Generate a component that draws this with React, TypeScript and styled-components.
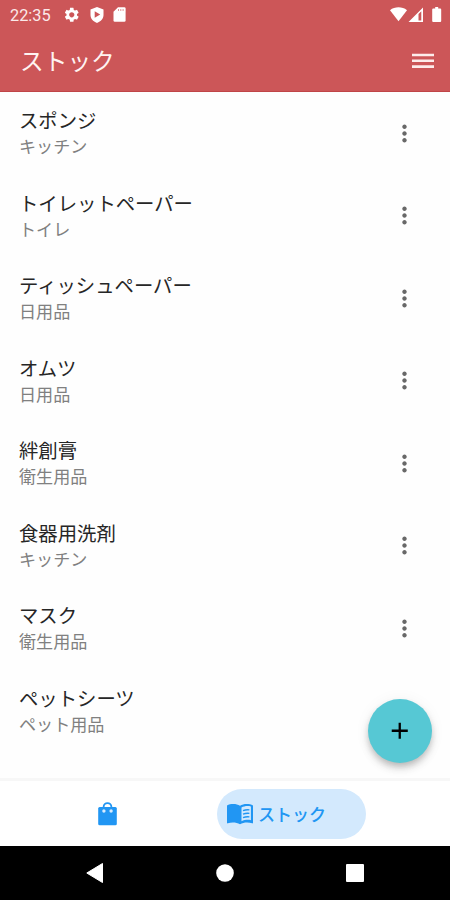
import React from "react";
import styled, { createGlobalStyle } from "styled-components";
import { MdAdd, MdMoreVert, MdSettings } from "react-icons/md";

const Global = createGlobalStyle`
  * { box-sizing: border-box; }
  body { margin: 0; background: #fff; font-family: Roboto, "Noto Sans CJK JP", sans-serif; }
  button { font: inherit; border: 0; padding: 0; background: none; }
  svg { display: block; flex: none; }
`;

const Screen = styled.div`
  position: relative;
  display: flex;
  flex-direction: column;
  width: 450px;
  height: 900px;
  overflow: hidden;
  background: #fefefe;
`;

const Header = styled.header`
  height: 92px;
  flex: none;
  background: #cc5658;
  border-bottom: 1px solid #c04547;
  color: #fff;
`;

const StatusBar = styled.div`
  display: flex;
  justify-content: space-between;
  height: 30px;
  padding: 0 7px 1px 10px;
  color: #fff;
`;

const StatusGroup = styled.div<{ $gap: number }>`
  display: flex;
  align-items: center;
  gap: ${(p) => p.$gap}px;
`;

const Clock = styled.span`
  width: 43px;
  padding-top: 1px;
  font-size: 16.3px;
  line-height: 29px;
  color: #fbe9e9;
`;

const AppBar = styled.div`
  display: flex;
  align-items: center;
  justify-content: space-between;
  height: 61px;
  padding: 0 16px 0 20px;
`;

const Title = styled.h1`
  margin: 0;
  padding-top: 2px;
  font-size: 23.7px;
  line-height: 36px;
  font-weight: 400;
  color: #fff3f1;
`;

const List = styled.ul`
  flex: 1;
  min-height: 0;
  margin: 0;
  padding: 0;
  list-style: none;
  overflow: hidden;
`;

const Row = styled.li`
  display: flex;
  align-items: center;
  justify-content: space-between;
  height: 82.5px;
  padding: 0 32px 0 19px;
`;

const RowText = styled.div`
  padding-top: 2px;
`;

const Name = styled.div`
  font-size: 19.35px;
  line-height: 27px;
  color: #262626;
`;

const Category = styled.div`
  font-size: 17.1px;
  line-height: 25px;
  color: #808080;
`;

const MoreButton = styled.button`
  color: #686868;
`;

const Fab = styled.button`
  position: absolute;
  left: 368px;
  top: 699px;
  display: flex;
  align-items: center;
  justify-content: center;
  width: 64px;
  height: 64px;
  border-radius: 50%;
  background: #56c8d4;
  color: #000;
  box-shadow: 0 4px 6px -1px rgba(0, 0, 0, 0.18), 0 6px 10px rgba(0, 0, 0, 0.1), 0 1px 16px rgba(0, 0, 0, 0.05);
`;

const Tabs = styled.nav`
  display: grid;
  grid-template-columns: 217px 149px;
  align-items: center;
  flex: none;
  height: 68px;
  border-top: 3px solid #f7f7f7;
  background: #fff;
`;

const Tab = styled.button<{ $active?: boolean }>`
  display: flex;
  align-items: center;
  justify-content: ${(p) => (p.$active ? "flex-start" : "center")};
  gap: 4px;
  height: 50px;
  padding-left: ${(p) => (p.$active ? 9 : 0)}px;
  padding-right: ${(p) => (p.$active ? 0 : 2)}px;
  border-radius: 25px;
  background: ${(p) => (p.$active ? "#d3e9fd" : "transparent")};
  color: #2196f3;
  font-size: 17px;
  font-weight: 500;
`;

const SystemNav = styled.div`
  display: flex;
  align-items: center;
  justify-content: space-between;
  flex: none;
  height: 54px;
  padding: 0 86px;
  background: #000;
`;

const items = [
  ["スポンジ", "キッチン"],
  ["トイレットペーパー", "トイレ"],
  ["ティッシュペーパー", "日用品"],
  ["オムツ", "日用品"],
  ["絆創膏", "衛生用品"],
  ["食器用洗剤", "キッチン"],
  ["マスク", "衛生用品"],
  ["ペットシーツ", "ペット用品"],
];

const MenuIcon = () => (
  <svg width="22" height="16" viewBox="0 0 22 16">
    <path stroke="#fdeceb" strokeWidth="2.6" d="M0 2h22M0 7.800h22M0 13.600h22" />
  </svg>
);

const ShieldIcon = () => (
  <svg width="14" height="16" viewBox="0 0 14 16">
    <path fill="#fff" fillRule="evenodd" d="M7 0 13.5 2.5V8C13.5 11.5 11 14.5 7 16 3 14.5.5 11.5.5 8V2.5ZM4.7 4.2v6.6L10.2 7.5Z" />
  </svg>
);

const CardIcon = () => (
  <svg width="13" height="15" viewBox="0 0 13 15">
    <path fill="#fff" d="M5 .3h6.3q1.3 0 1.3 1.3v11.8q0 1.3-1.3 1.3H1.8Q.5 14.700.5 13.400V4.800Z" />
    <path stroke="#cc5658" strokeWidth=".9" strokeOpacity=".7" d="M5.500 2v2M7.800 2v2M10.100 2v2" />
  </svg>
);

const SignalIcons = () => (
  <svg width="53" height="16" viewBox="0 0 53 16" fill="#fff">
    <path d="M0 3.2C4.8-.6 12.2-.6 17 3.2L8.500 14.300Z" />
    <path fillRule="evenodd" d="M18.500 15 33 .500V15ZM28.500 7v6.500h2.800V4.200Z" />
    <path d="M43.200 1.500h2V0h3v1.500h2q1 0 1 1V14q0 1-1 1h-7q-1 0-1-1V2.500q0-1 1-1Z" />
  </svg>
);

const BagIcon = () => (
  <svg width="19" height="24" viewBox="0 0 19 24">
    <path fill="none" stroke="#2196f3" strokeWidth="1.8" d="M5.600 6V5a3.900 3.900 0 0 1 7.800 0v1" />
    <rect x=".2" y="5" width="18.600" height="18.300" rx="1.500" fill="#2196f3" />
    <circle cx="5.900" cy="9" r="1.700" fill="#d8ecff" />
    <circle cx="13.100" cy="9" r="1.700" fill="#d8ecff" />
  </svg>
);

const BookIcon = () => (
  <svg width="28" height="22" viewBox="0 0 28 22">
    <path fill="#2196f3" d="M1 2.500C4.500.600 10.500.600 14 2.700 17.500.600 23.500.600 27 2.500V19.800c0 .500-.300.700-.800.500-3.600-1.300-8.700-1.200-12.200.900-3.500-2.100-8.600-2.200-12.200-.900-.500.200-.800 0-.800-.500Z" />
    <path fill="#d3e9fd" d="M15.500 4.500c2.700-1.500 6.400-1.900 9.400-1v13.700c-3-.700-6.700-.300-9.400 1.100Z" />
    <path fill="none" stroke="#2196f3" strokeWidth="1.400" d="M17 7.700q3-1.200 6.400-.800M17 11.200q3-1.200 6.400-.800M17 14.700q3-1.200 6.400-.800" />
  </svg>
);

export default function App() {
  return (
    <Screen>
      <Global />
      <Header>
        <StatusBar>
          <StatusGroup $gap={9.5}>
            <Clock>22:35</Clock>
            <MdSettings size={17.5} />
            <ShieldIcon />
            <CardIcon />
          </StatusGroup>
          <StatusGroup $gap={0}>
            <SignalIcons />
          </StatusGroup>
        </StatusBar>
        <AppBar>
          <Title>ストック</Title>
          <MenuIcon />
        </AppBar>
      </Header>
      <List>
        {items.map(([name, category]) => (
          <Row key={name}>
            <RowText>
              <Name>{name}</Name>
              <Category>{category}</Category>
            </RowText>
            {name !== "ペットシーツ" && (
              <MoreButton aria-label="メニュー">
                <MdMoreVert size={27} />
              </MoreButton>
            )}
          </Row>
        ))}
      </List>
      <Fab aria-label="追加">
        <MdAdd size={27.5} />
      </Fab>
      <Tabs>
        <Tab aria-label="買い物">
          <BagIcon />
        </Tab>
        <Tab $active>
          <BookIcon />
          ストック
        </Tab>
      </Tabs>
      <SystemNav>
        <svg width="17" height="20" viewBox="0 0 17 20"><path d="M16.500 .500v19L.800 10Z" fill="#fff" stroke="#fff" strokeLinejoin="round" /></svg>
        <svg width="18" height="18" viewBox="0 0 18 18"><circle cx="9" cy="9" r="8.800" fill="#fff" /></svg>
        <svg width="18" height="18" viewBox="0 0 18 18"><rect width="18" height="18" rx="1" fill="#fff" /></svg>
      </SystemNav>
    </Screen>
  );
}
